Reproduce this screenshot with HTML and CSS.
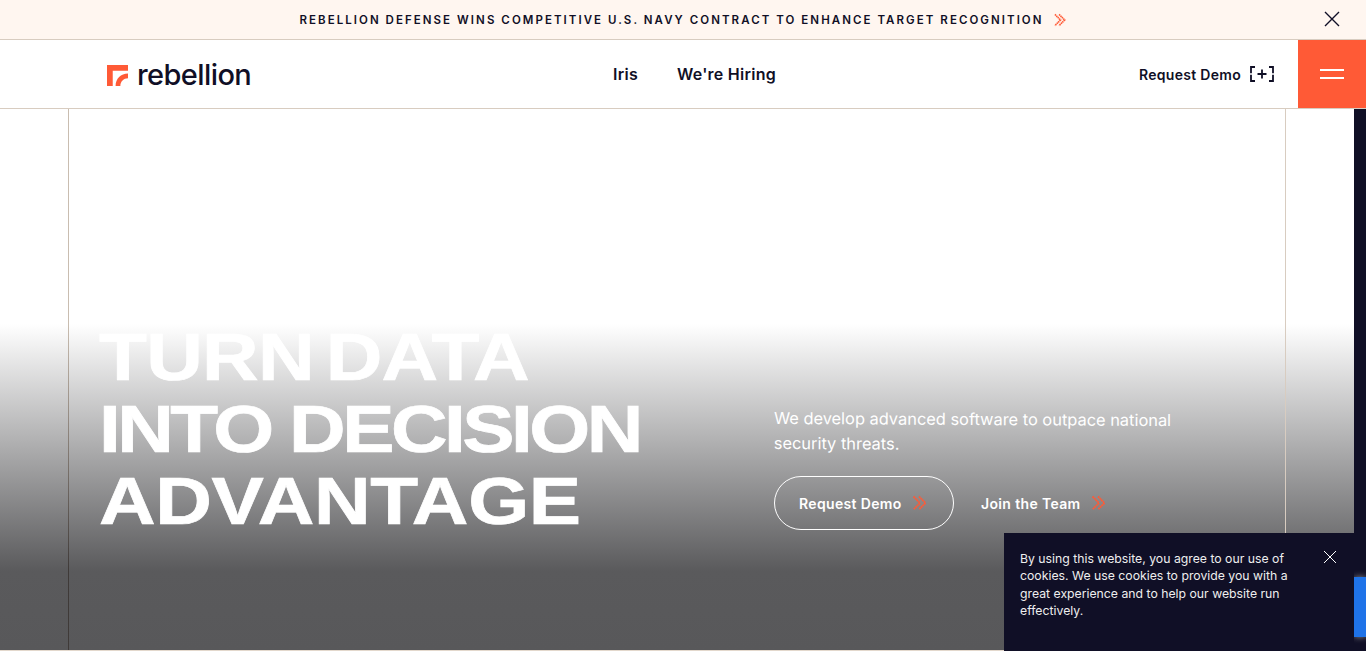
FILE: index.html
```html
<!DOCTYPE html>
<html lang="en">
<head>
<meta charset="utf-8">
<title>Rebellion Defense</title>
<link rel="stylesheet" href="styles.css">
</head>
<body>
<div class="announce">
  <a class="announce-text">REBELLION DEFENSE WINS COMPETITIVE U.S. NAVY CONTRACT TO ENHANCE TARGET RECOGNITION</a>
  <svg class="chev chev-small" viewBox="0 0 14 14"><path d="M1 1l6 6-6 6M5.500 1l6 6-6 6" fill="none" stroke="#ff5a36" stroke-width="1.800" stroke-dasharray="1.600 .5"/></svg>
  <svg class="announce-close" viewBox="0 0 16 16"><path d="M1 1l14 14M15 1 1 15" fill="none" stroke="#100f26" stroke-width="1.400"/></svg>
</div>
<header class="nav">
  <div class="brand">
    <svg class="logo" viewBox="0 0 22 22"><path fill="#ff5a36" d="M0 0h22v6H6v16H0z"/><path fill="#ff5a36" d="M9 22c0-7.500 5.500-13 13-13v5c-4.500 0-8 3.500-8 8z"/></svg>
    <span class="wordmark">rebellion</span>
  </div>
  <nav class="links"><a>Iris</a><a>We're Hiring</a></nav>
  <div class="nav-right">
    <a class="demo">Request Demo</a>
    <svg class="plus" viewBox="0 0 26 18"><path d="M6 2H2v6.200M2 9.800V16h4M20 2h4v6.200M24 9.800V16h-4" fill="none" stroke="#100f26" stroke-width="1.800"/><path d="M13 4.500v9M8.500 9h9" fill="none" stroke="#100f26" stroke-width="1.800"/></svg>
    <button class="menu"><span></span><span></span></button>
  </div>
</header>
<main class="hero">
  <div class="frame">
    <h1><span class="line-a">TURN DATA</span><span class="line-b">INTO DECISION</span><span class="line-c">ADVANTAGE</span></h1>
    <div class="side">
      <p>We develop advanced software to outpace national security threats.</p>
      <div class="cta">
        <a class="btn outline">Request Demo <svg class="chev" viewBox="0 0 16 16"><path d="M1.500 1.500 8 8l-6.500 6.500M7 1.500 13.500 8 7 14.500" fill="none" stroke="#ff5a36" stroke-width="1.900" stroke-dasharray="1.800 .5"/></svg></a>
        <a class="btn">Join the Team <svg class="chev" viewBox="0 0 16 16"><path d="M1.500 1.500 8 8l-6.500 6.500M7 1.500 13.500 8 7 14.500" fill="none" stroke="#ff5a36" stroke-width="1.900" stroke-dasharray="1.800 .5"/></svg></a>
      </div>
    </div>
  </div>
  <div class="strip"><div class="strip-blue"></div></div>
</main>
<aside class="cookie">
  <p>By using this website, you agree to our use of cookies. We use cookies to provide you with a great experience and to help our website run effectively.</p>
  <svg class="cookie-close" viewBox="0 0 14 14"><path d="M1 1l12 12M13 1 1 13" fill="none" stroke="#fff" stroke-width="1"/></svg>
</aside>
</body>
</html>
```
FILE: styles.css
```css
* { box-sizing: border-box; }
html, body { margin: 0; height: 651px; overflow: hidden; background: #fff; }
body { font-family: Inter, "Liberation Sans", sans-serif; color: #100f26; display: flex; flex-direction: column; }
.announce { height: 40px; flex: none; background: #fff6f0; border-bottom: 1px solid #d8ccc0; display: flex; align-items: center; justify-content: center; gap: 10px; position: relative; }
.announce-text { font-size: 11.500px; font-weight: 600; letter-spacing: 2.050px; }
.chev { width: 16px; height: 16px; flex: none; }
.chev-small { width: 13px; height: 14px; }
.announce-close { position: absolute; right: 26px; top: 11px; width: 16px; height: 16px; }
.nav { height: 69px; flex: none; background: #fff; border-bottom: 1px solid #d8ccc0; display: grid; grid-template-columns: 1fr auto 1fr; align-items: center; padding-left: 107px; }
.brand { display: flex; align-items: center; gap: 9px; padding-top: 2px; }
.logo { width: 21px; height: 21px; }
.wordmark { font-size: 29px; font-weight: 500; letter-spacing: -0.600px; line-height: 1; margin-top: -1px; }
.links { display: flex; gap: 39px; font-size: 16px; font-weight: 600; letter-spacing: .25px; margin-right: 84px; margin-top: -1px; }
.nav-right { display: flex; align-items: center; justify-content: flex-end; height: 68px; }
.demo { font-size: 14px; font-weight: 600; letter-spacing: .3px; }
.plus { width: 26px; height: 18px; margin: 0 23px 0 8px; }
.menu { width: 68px; height: 68px; background: #ff5a36; border: 0; padding: 0; display: flex; flex-direction: column; align-items: center; justify-content: center; gap: 6px; }
.menu span { display: block; width: 24px; height: 2px; background: #fff; }
.hero { flex: 1; position: relative; display: flex; border-bottom: 1px solid #e3d8cc; background: linear-gradient(180deg, #fff 0, #fff 215px, #5a5a5c 462px, #58585a 100%); }
.frame { position: absolute; left: 68px; top: 0; bottom: 0; width: 1218px; border-right: 1px solid #d8ccc0; padding: 212px 0 0 31px; display: flex; background: linear-gradient(180deg, #c9bdb0 0, #c9bdb0 215px, #3f3a38 462px) left top / 1px 100% no-repeat; }
h1 { margin: 0; width: 675px; flex: none; font-family: "Liberation Sans", sans-serif; font-size: 67px; font-weight: 700; line-height: 72px; color: #fff; -webkit-text-stroke: .7px #fff; transform: scaleX(1.170); transform-origin: left top; }
h1 span { display: block; white-space: nowrap; }
.line-a { letter-spacing: -.6px; word-spacing: -8px; }
.line-b { letter-spacing: -3px; }
.line-c { letter-spacing: -.3px; }
.side { padding-top: 85px; color: #fff; }
.side p { margin: 0 0 20px; width: 420px; font-size: 16.400px; line-height: 25px; font-weight: 400; transform: rotate(.3deg); transform-origin: left top; }
.cta { display: flex; align-items: center; gap: 27px; }
.btn { display: flex; align-items: center; gap: 10px; font-size: 14px; font-weight: 600; letter-spacing: .35px; height: 54px; }
.outline { border: 1px solid #fff; border-radius: 27px; padding: 0 24px; width: 180px; }
.strip { position: absolute; right: 0; top: 0; bottom: -1px; width: 12px; background: #100f26; }
.strip-blue { position: absolute; top: 468px; height: 60px; left: 0; right: 0; background: #1f73e8; box-shadow: 0 0 6px rgba(170,170,170,.8); }
.cookie { position: fixed; left: 1004px; top: 533px; width: 350px; height: 118px; background: #100f26; color: #eee; padding: 17px 16px; }
.cookie p { margin: 0; width: 280px; font-size: 12.250px; line-height: 17.400px; }
.cookie-close { position: absolute; left: 319px; top: 17px; width: 14px; height: 14px; }
```
